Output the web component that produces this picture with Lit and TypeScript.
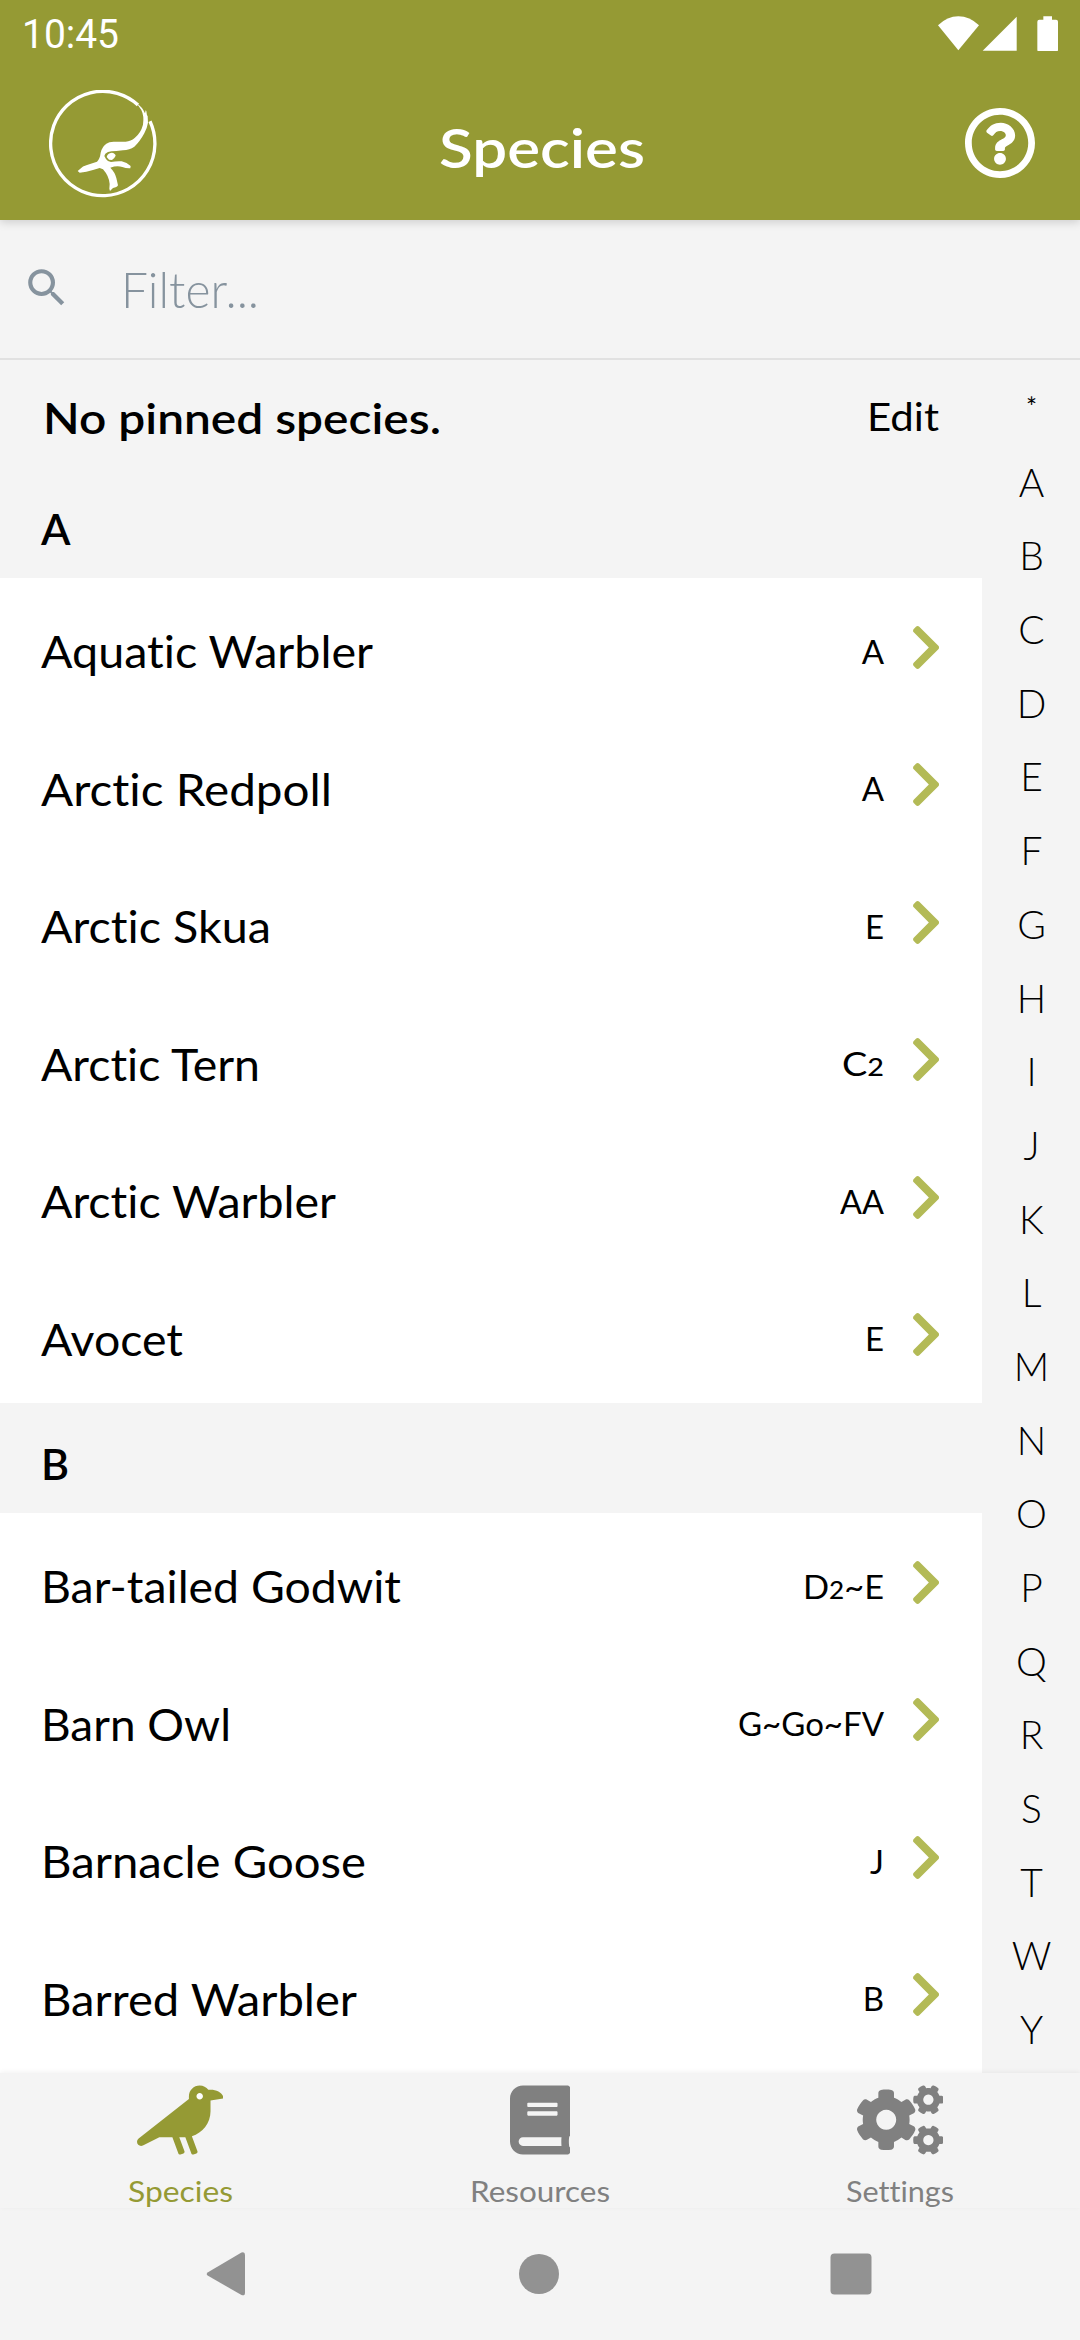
import { LitElement, html, svg, css } from "lit";
import { customElement, property } from "lit/decorators.js";

/** Text run stretched horizontally to a given width. */
@customElement("wide-text")
class WideText extends LitElement {
  @property() text = "";
  @property({ type: Number }) width = 0;

  static styles = css`
    :host {
      display: block;
      white-space: nowrap;
      font-variant-ligatures: none;
    }
    .run {
      display: inline-block;
      transform-origin: 0 50%;
    }
    .small {
      font-size: 0.76em;
      font-weight: 500;
    }
  `;

  render() {
    const parts = this.text.includes(":") ? [this.text] : this.text.split(/(\d+)/).filter((p) => p);
    return html`<span class="run">${parts.map((p) => (/^\d+$/.test(p) ? html`<span class="small">${p}</span>` : p))}</span>`;
  }

  updated() {
    const run = this.renderRoot.querySelector(".run") as HTMLElement;
    run.style.transform = "none";
    run.style.marginRight = "0";
    if (!this.width) return;
    const natural = run.getBoundingClientRect().width;
    run.style.transform = `scaleX(${this.width / natural})`;
    run.style.marginRight = `${this.width - natural}px`;
  }
}

interface Species {
  name: string;
  width: number;
  code: string;
  codeWidth?: number;
}

const sections: { letter: string; species: Species[] }[] = [
  {
    letter: "A",
    species: [
      { name: "Aquatic Warbler", width: 332, code: "A" },
      { name: "Arctic Redpoll", width: 291, code: "A" },
      { name: "Arctic Skua", width: 230, code: "E" },
      { name: "Arctic Tern", width: 219, code: "C2", codeWidth: 42 },
      { name: "Arctic Warbler", width: 295, code: "AA", codeWidth: 44 },
      { name: "Avocet", width: 142, code: "E" },
    ],
  },
  {
    letter: "B",
    species: [
      { name: "Bar-tailed Godwit", width: 360, code: "D2~E", codeWidth: 81 },
      { name: "Barn Owl", width: 190, code: "G~Go~FV", codeWidth: 146 },
      { name: "Barnacle Goose", width: 325, code: "J" },
      { name: "Barred Warbler", width: 316, code: "B" },
    ],
  },
];

const letters = "*ABCDEFGHIJKLMNOPQRSTWY".split("");

const chevron = html`<svg class="chevron" viewBox="27 37 265 438">
  <path d="M285.476 272.971L91.132 467.314c-9.373 9.373-24.569 9.373-33.941 0l-22.667-22.667c-9.357-9.357-9.375-24.522-.04-33.901L188.505 256 34.484 101.255c-9.335-9.379-9.317-24.544.04-33.901l22.667-22.667c9.373-9.373 24.569-9.373 33.941 0L285.475 239.03c9.373 9.372 9.373 24.568.001 33.941z" />
</svg>`;

const help = html`<svg class="help" viewBox="8 8 496 496">
  <path d="M256 8C119.043 8 8 119.083 8 256c0 136.997 111.043 248 248 248s248-111.003 248-248C504 119.083 392.957 8 256 8zm0 448c-110.532 0-200-89.431-200-200 0-110.495 89.472-200 200-200 110.491 0 200 89.471 200 200 0 110.53-89.431 200-200 200zm107.244-255.2c0 67.052-72.421 68.084-72.421 92.863V300c0 6.627-5.373 12-12 12h-45.647c-6.627 0-12-5.373-12-12v-8.659c0-35.745 27.1-50.034 47.579-61.516 17.561-9.845 28.324-16.541 28.324-29.579 0-17.246-21.999-28.693-39.784-28.693-23.189 0-33.894 10.977-48.942 29.969-4.057 5.12-11.46 6.071-16.666 2.124l-27.824-21.098c-5.107-3.872-6.251-11.066-2.644-16.363C184.846 131.491 214.94 112 261.794 112c49.071 0 101.45 38.304 101.45 88.8zM298 368c0 23.159-18.841 42-42 42s-42-18.841-42-42 18.841-42 42-42 42 18.841 42 42z" />
</svg>`;

const logo = html`<svg class="logo" viewBox="148 268 324 328">
  <path class="ring" d="M415 313A156.500 156.500 0 1 0 451 362" />
  <path d="M412 309Q428 318 436 338L437 334L438 329L440 331L442 344L444 346L445 366Q442 384 434 398Q420 424 404 438Q390 448 370 449L350 451L336 452L325 454L317 459L314 466Q318 476 325 481L334 484Q350 481 366 482Q382 485 393 496L392 503Q380 504 368 499Q352 494 332 501Q346 515 350 532L355 554Q352 561 340 562L331 571L329 564L330 550Q328 526 310 506L300 502Q280 508 260 513L240 516L234 511L242 504Q248 496 262 493L292 483Q301 474 303 456Q307 438 320 429Q328 423 342 423L378 423Q394 422 405 412Q424 396 430 372Q434 346 425 328Z" />
  <path d="M321 469Q324 457 336 456Q346 457 348 465Q344 474 337 478L328 477Z" />
</svg>`;

const crow = html`<svg class="tab-icon crow" viewBox="0 0 640 512">
  <path class="eye" d="M464 50a30 30 0 1 0 .1 0z" />
  <path d="M544 32h-16.36C513.04 12.68 490.09 0 464 0c-44.18 0-80 35.82-80 80v20.98L12.09 393.57A30.216 30.216 0 0 0 0 417.74c0 22.46 23.64 37.07 43.73 27.03L165.27 384h96.49l44.41 120.1c2.27 6.23 9.15 9.44 15.38 7.17l22.55-8.21c6.23-2.27 9.44-9.15 7.17-15.38L312.94 384H352c1.91 0 3.76-.23 5.66-.29l44.51 120.38c2.27 6.23 9.15 9.44 15.38 7.17l22.55-8.21c6.23-2.27 9.44-9.15 7.17-15.38l-41.24-111.52C485.74 352.8 544 279.26 544 192v-80l96-16c0-35.35-42.98-64-96-64zm-80 72c-13.25 0-24-10.75-24-24 0-13.26 10.75-24 24-24s24 10.74 24 24c0 13.25-10.75 24-24 24z" />
</svg>`;

const book = html`<svg class="tab-icon book" viewBox="0 0 448 512">
  <path d="M448 360V24c0-13.3-10.7-24-24-24H96C43 0 0 43 0 96v320c0 53 43 96 96 96h328c13.3 0 24-10.7 24-24v-16c0-7.5-3.5-14.3-8.9-18.7-4.2-15.4-4.2-59.3 0-74.7 5.4-4.3 8.9-11.1 8.9-18.6zM128 134c0-3.3 2.7-6 6-6h212c3.3 0 6 2.7 6 6v20c0 3.3-2.7 6-6 6H134c-3.3 0-6-2.7-6-6v-20zm0 64c0-3.3 2.7-6 6-6h212c3.3 0 6 2.7 6 6v20c0 3.3-2.7 6-6 6H134c-3.3 0-6-2.7-6-6v-20zm253.4 250H96c-17.7 0-32-14.3-32-32 0-17.6 14.4-32 32-32h285.4c-1.9 17.1-1.9 46.9 0 64z" />
</svg>`;

const smallGear =
  "M512.1 191l-8.2 14.3c-3 5.3-9.4 7.5-15.1 5.4-11.8-4.4-22.6-10.7-32.1-18.6-4.6-3.8-5.8-10.5-2.8-15.7l8.2-14.3c-6.9-8-12.3-17.3-15.9-27.4h-16.5c-6 0-11.2-4.3-12.2-10.3-2-12-2.1-24.6 0-37.1 1-6 6.2-10.4 12.2-10.4h16.5c3.6-10.1 9-19.4 15.9-27.4l-8.2-14.3c-3-5.2-1.9-11.9 2.8-15.7 9.5-7.9 20.4-14.2 32.1-18.6 5.7-2.1 12.1.1 15.1 5.4l8.2 14.3c10.5-1.9 21.2-1.9 31.7 0L552 6.3c3-5.3 9.4-7.5 15.1-5.4 11.8 4.4 22.6 10.7 32.1 18.6 4.6 3.8 5.8 10.5 2.8 15.7l-8.2 14.3c6.9 8 12.3 17.3 15.9 27.4h16.5c6 0 11.2 4.3 12.2 10.3 2 12 2.1 24.6 0 37.1-1 6-6.2 10.4-12.2 10.4h-16.5c-3.6 10.1-9 19.4-15.9 27.4l8.2 14.3c3 5.2 1.9 11.9-2.8 15.7-9.5 7.9-20.4 14.2-32.1 18.6-5.7 2.1-12.1-.1-15.1-5.4l-8.2-14.3c-10.4 1.9-21.2 1.9-31.7 0zM528 68a38 38 0 1 0 .1 0z";
const bigGear =
  "M386.3 286.1l33.7 16.8c10.1 5.8 14.5 18.1 10.5 29.1-8.9 24.2-26.4 46.4-42.6 65.8-7.4 8.9-20.2 11.1-30.3 5.3l-29.1-16.8c-16 13.7-34.6 24.6-54.9 31.7v33.6c0 11.6-8.3 21.6-19.7 23.6-24.6 4.2-50.4 4.4-75.9 0-11.5-2-20-11.9-20-23.6V418c-20.3-7.2-38.9-18-54.9-31.7L74 403c-10 5.8-22.9 3.6-30.3-5.3-16.2-19.4-33.3-41.6-42.2-65.7-4-10.9.4-23.2 10.5-29.1l33.3-16.8c-3.9-20.9-3.9-42.4 0-63.4L12 205.8c-10.1-5.8-14.6-18.1-10.5-29 8.9-24.2 26-46.4 42.2-65.8 7.4-8.9 20.2-11.1 30.3-5.3l29.1 16.8c16-13.7 34.6-24.6 54.9-31.7V57.1c0-11.5 8.2-21.5 19.6-23.5 24.6-4.2 50.5-4.4 76-.1 11.5 2 20 11.9 20 23.6v33.6c20.3 7.2 38.9 18 54.9 31.7l29.1-16.8c10-5.8 22.9-3.6 30.3 5.3 16.2 19.4 33.2 41.6 42.1 65.8 4 10.9.1 23.2-10 29.1l-33.7 16.8c3.9 21 3.9 42.5 0 63.5zM216 181a74 74 0 1 0 .1 0z";

const cogs = html`<svg class="tab-icon cogs" viewBox="0 0 640 512">
  <g fill-rule="evenodd">
    <path d=${bigGear} />
    ${[0, 299].map((y) => svg`<path transform="translate(0 ${y})" d=${smallGear} />`)}
  </g>
</svg>`;

const tabs = [
  { label: "Species", width: 105, icon: crow, active: true },
  { label: "Resources", width: 140, icon: book, active: false },
  { label: "Settings", width: 108, icon: cogs, active: false },
];

@customElement("app-root")
class AppRoot extends LitElement {
  static styles = css`
    :host {
      display: flex;
      flex-direction: column;
      box-sizing: border-box;
      width: 1080px;
      height: 2340px;
      overflow: hidden;
      background: #f4f4f4;
      color: #000;
      font-family: Lato, "Open Sans", sans-serif;
      line-height: 1.2;
    }
    svg {
      display: block;
      flex: none;
      fill: currentColor;
    }
    .top {
      height: 220px;
      flex: none;
      background: #959a34;
      color: #fff;
      z-index: 1;
      box-shadow: 0 2px 9px rgba(0, 0, 0, 0.17);
    }
    .status {
      display: flex;
      justify-content: space-between;
      align-items: center;
      height: 68px;
      padding: 0 22px 0 22px;
      box-sizing: border-box;
      font: 400 40.500px/1.2 Roboto, sans-serif;
    }
    .status-icons {
      width: 120px;
      height: 36px;
      margin-top: -3px;
    }
    .bar {
      display: grid;
      grid-template-columns: 1fr auto 1fr;
      height: 152px;
      padding: 0 45px 0 49px;
      align-items: start;
    }
    .logo {
      width: 108px;
      height: 109.300px;
      margin-top: 21.500px;
    }
    .ring {
      fill: none;
      stroke: currentColor;
      stroke-width: 10;
    }
    .title {
      margin-top: 47px;
      font-size: 53.500px;
      font-weight: 600;
    }
    .help {
      width: 70px;
      height: 70px;
      margin-top: 40px;
      justify-self: end;
    }
    .filter {
      display: flex;
      align-items: center;
      height: 138px;
      flex: none;
      border-bottom: 2px solid #e1e1e1;
      color: #86939e;
      padding-left: 21.700px;
    }
    .search {
      width: 49.500px;
      height: 49.500px;
      margin-top: -2px;
    }
    .placeholder {
      margin-left: 50px;
      font-size: 50px;
      font-weight: 300;
    }
    .content {
      display: flex;
      flex: 1;
      min-height: 0;
    }
    .list {
      width: 982px;
      overflow: hidden;
      background: #fff;
    }
    .pinned {
      display: flex;
      justify-content: space-between;
      height: 107.500px;
      box-sizing: border-box;
      padding: 32px 43px 0 43px;
      font-size: 43px;
      font-weight: 600;
      background: #f4f4f4;
    }
    .edit {
      font-size: 39px;
      font-weight: 400;
      margin-top: 1px;
    }
    .letter {
      height: 110px;
      box-sizing: border-box;
      padding: 35px 0 0 41px;
      font-size: 43px;
      font-weight: 600;
      background: #f4f4f4;
    }
    .row {
      display: flex;
      align-items: center;
      height: 137.500px;
      box-sizing: border-box;
      padding: 2px 43px 0 41px;
    }
    .name {
      flex: 1;
      padding-top: 8px;
      font-size: 43.500px;
    }
    .code {
      padding-top: 9px;
      font-size: 33px;
      margin-right: 29px;
    }
    .chevron {
      width: 26px;
      height: 43px;
      color: #b3ba56;
    }
    .index {
      flex: 1;
      display: flex;
      flex-direction: column;
      align-items: center;
      padding: 12px 0 0 1px;
    }
    .index-item {
      height: 73.700px;
      flex: none;
      line-height: 73.700px;
      font-size: 39px;
      font-weight: 300;
    }
    .index-item.star {
      font-size: 26px;
      font-weight: 400;
      line-height: 70px;
    }
    .tabs {
      display: grid;
      grid-template-columns: repeat(3, 1fr);
      height: 135px;
      flex: none;
      z-index: 1;
      background: #f4f4f4;
      color: #808080;
      box-shadow: 0 -1px 5px rgba(0, 0, 0, 0.06);
    }
    .tab {
      display: flex;
      flex-direction: column;
      align-items: center;
      padding-top: 12px;
    }
    .tab.active {
      color: #959a34;
    }
    .tab-icon {
      height: 70px;
    }
    .crow,
    .cogs {
      width: 86.500px;
    }
    .book {
      width: 60.500px;
    }
    .eye {
      fill: #fff;
    }
    .tab-label {
      font-size: 28px;
      margin-top: 20px;
    }
    .nav {
      height: 132px;
      flex: none;
      display: flex;
      justify-content: space-between;
      align-items: center;
      padding: 0 208px 0 206px;
      color: #929292;
      box-sizing: border-box;
    }
    .nav-icon {
      width: 42px;
      height: 46px;
    }
  `;

  render() {
    return html`
      <header class="top">
        <div class="status">
          <wide-text text="10:45" width="97"></wide-text>
          <svg class="status-icons" viewBox="114 42 360 108">
            <path d="M114 73Q142 46 175 46Q209 46 237 73L175 148Z" />
            <path d="M350 47V149H248Z" />
            <path d="M430 46H456V56H468Q474 56 474 62V146Q474 152 468 152H418Q412 152 412 146V62Q412 56 418 56H430Z" />
          </svg>
        </div>
        <div class="bar">
          ${logo}
          <wide-text class="title" text="Species" width="206"></wide-text>
          ${help}
        </div>
      </header>
      <div class="filter">
        <svg class="search" viewBox="0 0 24 24">
          <path d="M15.5 14h-.79l-.28-.27A6.471 6.471 0 0 0 16 9.5 6.5 6.5 0 1 0 9.5 16c1.61 0 3.09-.59 4.23-1.57l.27.28v.79l5 4.99L20.49 19l-4.99-5zm-6 0C7.010 14 5 11.990 5 9.500S7.010 5 9.500 5 14 7.010 14 9.500 11.990 14 9.500 14z" />
        </svg>
        <wide-text class="placeholder" text="Filter..." width="138"></wide-text>
      </div>
      <main class="content">
        <div class="list">
          <div class="pinned">
            <wide-text text="No pinned species." width="398"></wide-text>
            <wide-text class="edit" text="Edit" width="72"></wide-text>
          </div>
          ${sections.map(
            (s) => html`
              <div class="letter">${s.letter}</div>
              ${s.species.map(
                (sp) => html`<div class="row">
                  <wide-text class="name" text=${sp.name} width=${sp.width}></wide-text>
                  <wide-text class="code" text=${sp.code} width=${sp.codeWidth ?? 0}></wide-text>
                  ${chevron}
                </div>`
              )}
            `
          )}
        </div>
        <nav class="index">
          ${letters.map((l) => html`<div class="index-item ${l === "*" ? "star" : ""}">${l}</div>`)}
        </nav>
      </main>
      <nav class="tabs">
        ${tabs.map(
          (t) => html`<div class="tab ${t.active ? "active" : ""}">
            ${t.icon}
            <wide-text class="tab-label" text=${t.label} width=${t.width}></wide-text>
          </div>`
        )}
      </nav>
      <div class="nav">
        <svg class="nav-icon" viewBox="0 0 42 46">
          <path d="M2 21.200L35.500 1.600Q39 .4 39 4V41.500Q39 45.400 35.500 44L2 24.800Q-.6 23 2 21.200Z" />
        </svg>
        <svg class="nav-icon" viewBox="0 0 42 46"><circle cx="21" cy="23" r="20" /></svg>
        <svg class="nav-icon" viewBox="0 0 42 46"><rect x=".5" y="2.500" width="41" height="41" rx="4" /></svg>
      </div>
    `;
  }
}
